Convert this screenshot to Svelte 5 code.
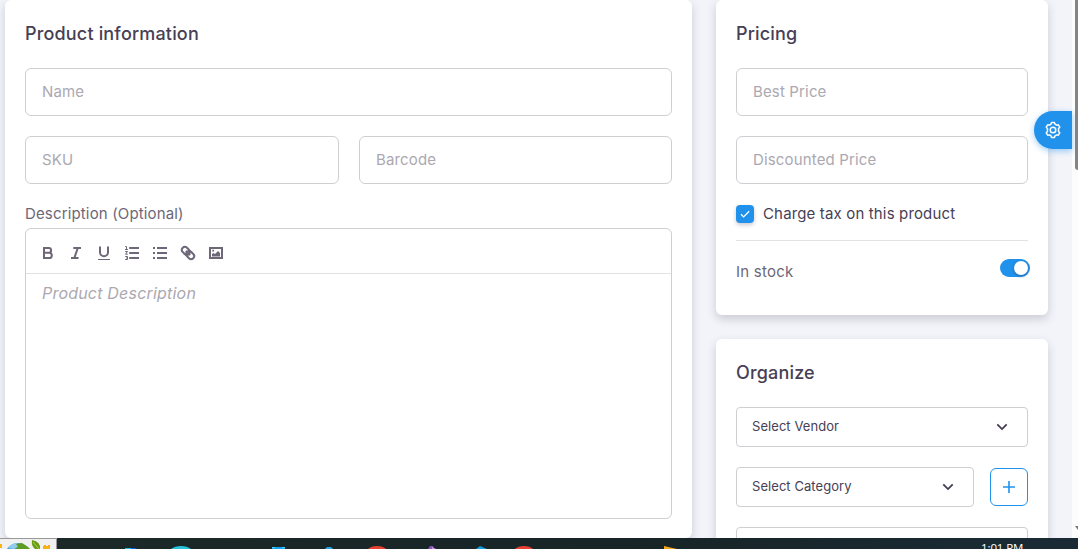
<script lang="ts">
  const tools = ['bold', 'italic', 'underline', 'ordered', 'bullets', 'link', 'image'];
</script>

{#snippet chevron()}
  <svg class="chevron" width="12" height="8" viewBox="0 0 12 8"><path d="M1.3 1.4 6 6.1l4.7-4.7" /></svg>
{/snippet}

<div class="screen">
  <div class="viewport">
    <main>
      <section class="card product">
        <h2>Product information</h2>
        <div class="field">Name</div>
        <div class="pair">
          <div class="field">SKU</div>
          <div class="field">Barcode</div>
        </div>
        <div class="label">Description (Optional)</div>
        <div class="editor">
          <div class="toolbar">
            {#each tools as tool}
              <button aria-label={tool}>
                <svg width="18" height="18" viewBox="0 0 18 18">
                  {#if tool === 'bold'}
                    <path class="w2" d="M5 4h4.7a2.4 2.4 0 0 1 0 4.8H5zM5 8.8h5.2a2.6 2.6 0 0 1 0 5.2H5z" />
                  {:else if tool === 'italic'}
                    <path class="w2" d="M6.3 4H14M4 14h7.5M10.8 4 7.3 14" />
                  {:else if tool === 'underline'}
                    <path class="w2" d="M5 2.5v5.7a4 4 0 0 0 8 0V2.5" /><path class="w1" d="M3 15.5h12" />
                  {:else if tool === 'ordered'}
                    <path class="w2" d="M6.2 4H16M6.2 9H16M6.2 14H16" />
                    <path class="w1" d="M2.2 2.5h1.3v3M2 5.5h3M2.2 7.5h2.3L2.5 10.2h2.3M2.2 12.5h2.3v3H2.2M3 14h1.5" />
                  {:else if tool === 'bullets'}
                    <path class="w2" d="M6 4h10M6 9h10M6 14h10M2 4h2M2 9h2M2 14h2" />
                  {:else if tool === 'link'}
                    <g transform="rotate(45 9 9)">
                      <rect class="w2" x="1.6" y="6" width="8.7" height="6" rx="3" />
                      <rect class="w2" x="7.7" y="6" width="8.7" height="6" rx="3" />
                      <path class="w2" d="M6 9h6" />
                    </g>
                  {:else}
                    <rect class="w2" x="3" y="4" width="12" height="10" />
                    <path class="solid" d="M5 12.5V10l1.6-1 1.4 1 3-3 2 2v3.5zM5.3 5.8h1.8v1.8H5.3z" />
                  {/if}
                </svg>
              </button>
            {/each}
          </div>
          <div class="placeholder">Product Description</div>
        </div>
      </section>

      <aside>
        <section class="card pricing">
          <h2>Pricing</h2>
          <div class="field">Best Price</div>
          <div class="field">Discounted Price</div>
          <div class="check">
            <span class="box"><svg width="18" height="18" viewBox="0 0 18 18"><path d="m5 9.3 2.6 2.6 5.6-5.6" /></svg></span>
            <span>Charge tax on this product</span>
          </div>
          <div class="stock">
            <span>In stock</span>
            <span class="switch"><i></i></span>
          </div>
        </section>

        <section class="card organize">
          <h2>Organize</h2>
          <div class="select">Select Vendor {@render chevron()}</div>
          <div class="category">
            <div class="select">Select Category {@render chevron()}</div>
            <button class="add" aria-label="add"><svg width="12" height="12" viewBox="0 0 12 12"><path d="M6 0v12M0 6h12" /></svg></button>
          </div>
          <div class="select"></div>
        </section>
      </aside>
    </main>
    <div class="scroll"><div class="thumb"></div><svg class="arrow" width="3" height="4" viewBox="0 0 3 4"><path d="M0 0h3v4z" /></svg></div>
    <button class="customizer" aria-label="settings">
      <svg width="18" height="18" viewBox="0 0 24 24">
        <path d="M9.3 4.3 10.1 2h3.8l.8 2.3 2 1.2 2.4-.5 1.9 3.3-1.6 1.8v3.8l1.6 1.8-1.9 3.3-2.4-.5-2 1.2-.8 2.3h-3.8l-.8-2.3-2-1.2-2.4.5L3 15.7l1.6-1.8v-3.8L3 8.3 4.9 5l2.4.5z" />
        <circle cx="12" cy="12" r="3.7" />
      </svg>
    </button>
  </div>

  <footer>
    <svg class="earth" width="57" height="11" viewBox="0 0 57 11">
      <path fill="#f0f0f0" d="M0 0h57v11H0z" />
      <path fill="#f7b512" d="M0 6h2v4H0zM43 8h7v3h-7z" />
      <path fill="#ffa51c" d="M44 7h2v2h-2zM48 7h2v2h-2z" />
      <circle cx="18" cy="18" r="13" fill="#459bcb" />
      <path fill="#91cceb" d="M8 10q4-5 9-5l2 3-5 3z" />
      <path fill="#5d9c22" d="m16 6 6-1 6 4 2 2H15l3-2z" />
      <path fill="#679d13" d="M32 2q9 2 8 9h-5q-4-3-3-9" />
      <path fill="none" stroke="#b6cd44" d="m33 4 6 7" />
      <path fill="none" stroke="#999" d="M0 .5h56.5V11" />
    </svg>
    <svg class="apps" width="640" height="11" viewBox="57 0 640 11">
      <path fill="#20b9eb" d="M125 10h7l4 1h-11z" /><path fill="#075fe0" d="M131 10h4l2 1h-6z" />
      <path fill="#26c4dc" d="M171 11q4-3 10-3t10 3z" />
      <path fill="#10a4f5" d="M272 9h13v2h-13z" /><path fill="#4bd1ff" d="M272 9h3v1h-3zM282 9h3v1h-3z" />
      <path fill="#20a6e5" d="m325 11 2-2h4l2 2z" />
      <path fill="#e94131" d="M368 11q3-3 9-3t9 3z" />
      <path fill="#8653bd" d="m428 11 2-3h3l1 3z" /><path fill="#cf91ef" d="m432 9 4 2h-4z" />
      <path fill="#149bdc" d="m476 11 4-3 7 3z" />
      <path fill="#e94131" d="M515 11q3-3 9-3t9 3z" />
      <path fill="#f6a51c" d="m664 8 13 3h-13z" />
    </svg>
    <span class="clock">1:01 PM</span>
  </footer>
</div>

<style>
  :global(body) { margin: 0; overflow: hidden; }
  * { box-sizing: border-box; }
  .screen { width: 1078px; height: 549px; overflow: hidden; display: grid; grid-template-rows: 538px 11px; font: 15px/22px Inter, sans-serif; letter-spacing: .15px; color: #6d6777; }
  .viewport { position: relative; display: grid; grid-template-columns: 1072px 6px; min-height: 0; overflow: hidden; background: #f3f4fa; }
  main { display: grid; grid-template-columns: 687px 332px; gap: 24px; padding-left: 5px; height: 538px; align-items: start; }
  .card { background: #fff; border-radius: 6px; padding: 20px; box-shadow: 0 4px 10px rgba(46, 38, 61, .2); }
  .product { height: 538px; }
  h2 { margin: 0 0 20px; height: 28px; font-size: 18px; line-height: 28px; font-weight: 500; letter-spacing: .17px; color: #474055; }
  .field { height: 48px; border: 1px solid #cfced3; border-radius: 6px; padding: 0 16px; line-height: 46px; color: #aba8b1; margin-bottom: 20px; }
  .pair { display: grid; grid-template-columns: 314px 313px; gap: 20px; }
  .pair .field { margin-bottom: 19px; }
  .label { height: 25px; }
  .editor { height: 291px; border: 1px solid #cfced3; border-radius: 6px; }
  .toolbar { height: 45px; border-bottom: 1px solid #e2e1e5; padding: 3px 0 0 8px; display: flex; align-items: center; }
  .toolbar button { width: 28px; height: 24px; padding: 0; border: 0; background: none; display: grid; place-items: center; }
  .toolbar svg { width: 18px; height: 18px; }
  .w2, .w1 { fill: none; stroke: #6d6777; stroke-width: 2; }
  .w1 { stroke-width: 1; }
  .solid { fill: #6d6777; }
  .placeholder { padding: 8px 16px; font-size: 16px; line-height: 23px; font-style: italic; letter-spacing: .2px; color: #aba8b1; }
  main > aside { display: grid; gap: 24px; }
  .pricing { height: 315px; }
  .check { display: flex; align-items: center; height: 20px; gap: 9px; color: #474055; }
  .box { width: 18px; height: 18px; border-radius: 4px; background: #2092ec; box-shadow: 0 2px 4px #cbc9d0; display: block; }
  .box svg { display: block; fill: none; stroke: white; stroke-width: 1.3; }
  .stock { border-top: 1px solid #e2e1e5; margin-top: 16px; height: 62px; display: flex; justify-content: space-between; align-items: center; }
  .stock > span:first-child { letter-spacing: .25px; }
  .switch { width: 30px; height: 18px; border-radius: 9px; background: #2092ec; margin: -7px -2px 0 0; padding: 2px; display: flex; justify-content: flex-end; }
  .switch i { width: 14px; height: 14px; border-radius: 50%; background: #fff; box-shadow: 0 1px 3px #2464a5; }
  .organize { height: 230px; }
  .select { height: 40px; border: 1px solid #cfced3; border-radius: 4px; display: flex; justify-content: space-between; align-items: center; padding: 0 19px 2px 15px; font-size: 13px; letter-spacing: .06px; color: #474055; margin-bottom: 20px; }
  .chevron { fill: none; stroke: #433c50; stroke-width: 1.8; margin-top: 2px; }
  .category { display: grid; grid-template-columns: 238px 38px; gap: 16px; }
  .add { height: 38px; margin-top: 1px; padding: 0; background: #fff; border: 1px solid #2092ec; border-radius: 6px; display: grid; place-items: center; }
  .add svg { stroke: #2092ec; stroke-width: 1.6; }
  .scroll { background: #fcfcfc; height: 538px; display: flex; flex-direction: column; justify-content: space-between; align-items: flex-end; padding-bottom: 8px; }
  .thumb { width: 3px; height: 170px; background: #858585; border-radius: 0 0 0 3px; }
  .arrow { fill: #777; }
  .customizer { position: absolute; right: 6px; top: 111px; width: 38px; height: 38px; border: 0; padding: 0; background: #2092ec; border-radius: 19px 0 0 19px; display: grid; place-items: center; box-shadow: 0 2px 6px rgba(32, 146, 236, .45); }
  .customizer svg { fill: none; stroke: white; stroke-width: 2; stroke-linejoin: round; }
  footer { background: linear-gradient(90deg, #1b2928, #172527 60%, #1b2b36); display: flex; overflow: hidden; height: 11px; }
  footer svg { display: block; flex: none; }
  .clock { color: #fff; font: 11.5px/16px "Open Sans", sans-serif; letter-spacing: -.1px; margin: 2px 0 0 284px; white-space: nowrap; }
</style>
